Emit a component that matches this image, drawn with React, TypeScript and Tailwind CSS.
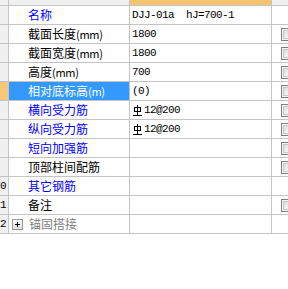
import React from "react";

type Row = {
  num: string
  name: string
  unit?: string
  tone: "blue" | "black" | "gray"
  value?: string
  rebar?: boolean
  check: boolean
  selected?: boolean
  expand?: boolean
}

// 行号列被横向滚动过，只露出两位数的个位
const rows: Row[] = [
  { num: "", name: "名称", tone: "blue", value: "DJJ-01a  hJ=700-1", check: false },
  { num: "", name: "截面长度", unit: "(mm)", tone: "black", value: "1800", check: true },
  { num: "", name: "截面宽度", unit: "(mm)", tone: "black", value: "1800", check: true },
  { num: "", name: "高度", unit: "(mm)", tone: "black", value: "700", check: true },
  { num: "", name: "相对底标高", unit: "(m)", tone: "black", value: "(0)", check: true, selected: true },
  { num: "", name: "横向受力筋", tone: "blue", value: "12@200", rebar: true, check: true },
  { num: "", name: "纵向受力筋", tone: "blue", value: "12@200", rebar: true, check: true },
  { num: "", name: "短向加强筋", tone: "blue", check: true },
  { num: "", name: "顶部柱间配筋", tone: "black", check: true },
  { num: "0", name: "其它钢筋", tone: "blue", check: false },
  { num: "1", name: "备注", tone: "black", check: true },
  { num: "2", name: "锚固搭接", tone: "gray", check: false, expand: true },
]

// 钢筋等级符号 (HRB), drawn since no font carries it
function RebarMark() {
  return (
    <svg width="11" height="11" viewBox="0 0 11 11" className="mr-[1px] shrink-0">
      <rect x="2.5" y="2.5" width="6" height="4" fill="none" stroke="#000" strokeWidth="1" />
      <line x1="5.5" y1="0" x2="5.5" y2="10" stroke="#000" strokeWidth="1" />
      <line x1="1" y1="10.5" x2="10" y2="10.5" stroke="#000" strokeWidth="1" />
    </svg>
  )
}

function CheckBox() {
  return (
    <div className="w-[13px] h-[13px] shrink-0 border border-[#808080] bg-[#f4f4f4] p-[1px]">
      <div className="w-full h-full border border-[#c8c8c8] bg-gradient-to-br from-[#dcdcdc] to-[#ffffff]" />
    </div>
  )
}

export default function App() {
  const tones = { blue: "text-[#0000ff]", black: "text-black", gray: "text-[#808080]" }

  return (
    <div className="w-[288px] h-[289px] bg-white overflow-hidden" style={{ fontFamily: '"Noto Sans CJK SC", sans-serif' }}>
      {/* header */}
      <div className="flex h-[6px] border-b border-[#c4c4c4]">
        <div className="w-[9px] shrink-0 bg-[#f0f0f0] border-r border-[#c4c4c4]" />
        <div className="w-[121px] shrink-0 bg-[#f0f0f0] border-r border-[#c4c4c4]" />
        <div className="w-[142px] shrink-0 bg-[#f5c46e] border-r border-[#c4c4c4]" />
        <div className="flex-1 bg-[#f0f0f0]" />
      </div>

      {rows.map((r, i) => (
        <div key={i} className="flex h-[19px] border-b border-[#c4c4c4]">
          <div
            className={`w-[9px] shrink-0 border-r border-[#c4c4c4] flex items-center pl-[0px] text-[11px] text-black ${
              r.selected ? "bg-[#f7c77a]" : "bg-[#f0f0f0]"
            }`}
            style={{ fontFamily: '"Liberation Mono", monospace' }}
          >
            {r.num}
          </div>
          <div
            className={`w-[121px] shrink-0 border-r border-[#c4c4c4] flex items-center whitespace-nowrap text-[12px] ${
              r.selected ? "bg-[#3399ff] text-white" : tones[r.tone]
            } ${r.expand ? "pl-[3px]" : "pl-[19px]"}`}
          >
            {r.expand && (
              <div className="w-[11px] h-[11px] mr-[6px] border border-[#9a9a9a] bg-gradient-to-b from-[#ffffff] to-[#dedede] relative">
                <div className="absolute left-[2px] top-[4px] w-[5px] h-[1px] bg-black" />
                <div className="absolute left-[4px] top-[2px] w-[1px] h-[5px] bg-black" />
              </div>
            )}
            {r.name}
            {r.unit && <span className="text-[11px] tracking-[-0.3px]">{r.unit}</span>}
          </div>
          <div
            className="w-[142px] shrink-0 border-r border-[#c4c4c4] flex items-center pl-[2px] whitespace-pre text-[11px] tracking-[-0.6px] text-black"
            style={{ fontFamily: '"Liberation Mono", monospace' }}
          >
            {r.rebar && <RebarMark />}
            {r.value}
          </div>
          <div className="flex-1 flex items-center pl-[9px] overflow-hidden">
            {r.check && <CheckBox />}
          </div>
        </div>
      ))}
    </div>
  )
}
